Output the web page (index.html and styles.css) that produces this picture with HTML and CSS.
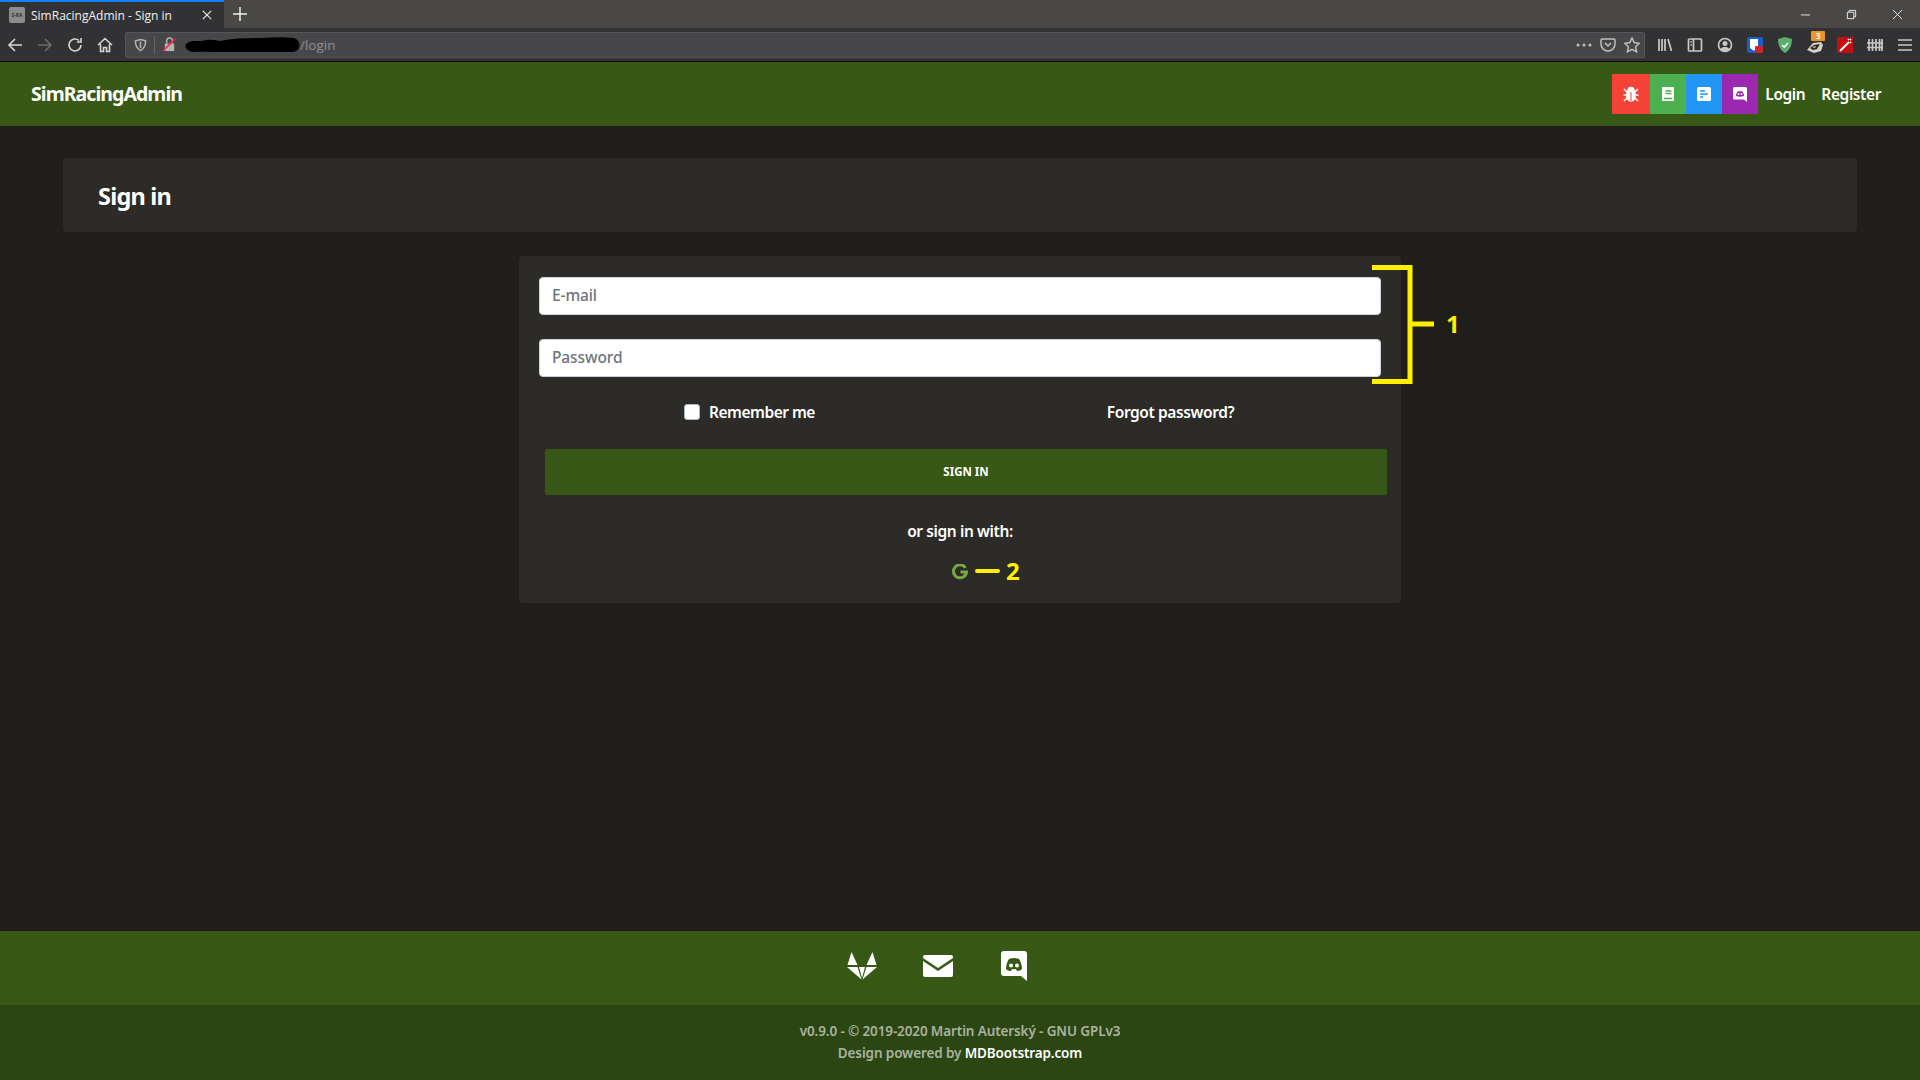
FILE: index.html
```html
<!DOCTYPE html>
<html lang="en">
<head>
<meta charset="utf-8">
<title>SimRacingAdmin - Sign in</title>
<link rel="stylesheet" href="styles.css">
</head>
<body>
<div class="tabbar">
  <div class="tab">
    <span class="favicon">S-RA</span>
    <span class="tab-title">SimRacingAdmin - Sign in</span>
    <svg class="tab-close" viewBox="0 0 12 12"><path d="M1 1l10 10M11 1L1 11"/></svg>
  </div>
  <svg class="new-tab" viewBox="0 0 14 14"><path d="M7 0v14M0 7h14"/></svg>
  <div class="win-controls">
    <svg viewBox="0 0 12 12"><path d="M1 6.500h10"/></svg>
    <svg viewBox="0 0 12 12"><path d="M1.500 3.500h7v7h-7zM3.500 3.500v-2h7v7h-2"/></svg>
    <svg viewBox="0 0 12 12"><path d="M1 1l10 10M11 1L1 11"/></svg>
  </div>
</div>
<div class="toolbar">
  <div class="nav-icons">
    <svg viewBox="0 0 16 16"><path d="M15 8H2M8 2L2 8l6 6"/></svg>
    <svg class="dim" viewBox="0 0 16 16"><path d="M1 8h13M8 2l6 6-6 6"/></svg>
    <svg viewBox="0 0 16 16"><path d="M14 8a6 6 0 1 1-2-4.500M14 1v4h-4"/></svg>
    <svg viewBox="0 0 16 16"><path d="M1 8l7-6.500L15 8M3.500 7v7.500h3v-4h3v4h3V7"/></svg>
  </div>
  <div class="urlbar">
    <svg class="shield" viewBox="0 0 14 14"><path d="M7 1l5.500 1.500c0 5-1.500 8.500-5.500 10.500C3 11 1.500 7.500 1.500 2.500z"/><path d="M7 3.500v7"/></svg>
    <span class="url-sep"></span>
    <svg class="lock" viewBox="0 0 16 16"><path class="lock-body" d="M3 7h10v8H3z"/><path class="lock-arc" d="M5 7V4a3 3 0 0 1 6 0v3"/><path class="lock-slash" d="M1 15L14 2"/></svg>
    <svg class="redacted" viewBox="0 0 116 15"><path d="M2 7c4-4 10-3 16-3 6-2 12-1 18 0 14-3 28-3 42-3 10-1 24-1 32 0 5 2 6 6 5 9-1 4-4 5-8 5H40c-8 1-18-1-30 0C4 15 0 11 2 7z"/></svg>
    <span class="url-path">/login</span>
    <span class="url-spacer"></span>
    <svg class="url-more" viewBox="0 0 16 4"><circle cx="2" cy="2" r="1.500"/><circle cx="8" cy="2" r="1.500"/><circle cx="14" cy="2" r="1.500"/></svg>
    <svg class="url-icon" viewBox="0 0 16 16"><path d="M2 2h12a1 1 0 0 1 1 1v4a7 7 0 0 1-14 0V3a1 1 0 0 1 1-1zM5 6l3 3 3-3"/></svg>
    <svg class="url-icon" viewBox="0 0 16 16"><path d="M8 1l2.200 4.600 5 .7-3.600 3.500.9 5L8 12.400l-4.500 2.400.9-5L.8 6.300l5-.7z"/></svg>
  </div>
  <div class="ext-icons">
    <svg viewBox="0 0 16 16"><path d="M2 2v12M5 2v12M8 2v12M11 2l3.500 12"/></svg>
    <svg viewBox="0 0 16 16"><path d="M2.500 2h11a1 1 0 0 1 1 1v10a1 1 0 0 1-1 1h-11a1 1 0 0 1-1-1V3a1 1 0 0 1 1-1zM6.500 2v12M3.500 5h1.500M3.500 8h1.500"/></svg>
    <svg viewBox="0 0 16 16"><circle cx="8" cy="8" r="6.500"/><circle class="ext-fill" cx="8" cy="6.500" r="2.500"/><path class="ext-fill" d="M3.500 12.500c1-2 2.500-2.500 4.500-2.500s3.500.5 4.500 2.500c-2.500 2-6.500 2-9 0z"/></svg>
    <svg class="ext-color" viewBox="0 0 16 16"><rect x="0" y="0" width="16" height="16" rx="2" fill="#1a5fc8"/><path d="M3 2h8v7l-4 5-4-3z" fill="#fff"/><rect x="8" y="9" width="8" height="7" rx="1" fill="#d2232a"/></svg>
    <svg class="ext-color" viewBox="0 0 16 16"><path d="M8 0l7 2c0 6-2 11-7 14C3 13 1 8 1 2z" fill="#5cae6a"/><path d="M5 8l2.200 2.200L11 6" fill="none" stroke="#fff" stroke-width="1.500"/></svg>
    <div class="badger">
      <svg class="ext-color" viewBox="0 0 16 16"><path d="M0 12L6 5l8-1 2 3-2 6-7 2z" fill="#d8d2c4"/><path d="M3 10l4-3 6-1-3 5-4 1z" fill="#2a2a2a"/><path d="M5 9l4-1-1 2z" fill="#d8d2c4"/></svg>
      <span class="badge">3</span>
    </div>
    <svg class="ext-color" viewBox="0 0 16 16"><rect width="16" height="16" fill="#c40f12"/><path d="M3 14L12 5" stroke="#fff" stroke-width="2"/><path d="M11 2l1 1M14 2l-1 1M14 6l-1-1" stroke="#fff"/></svg>
    <svg viewBox="0 0 16 16"><path d="M2 2v12M5.500 2v12M9 2v12M12.500 2v12M15 2v12M0 6h16M0 10.500h16"/></svg>
    <svg viewBox="0 0 16 16"><path d="M1 3h14M1 8h14M1 13h14"/></svg>
  </div>
</div>

<header class="navbar">
  <a class="brand">SimRacingAdmin</a>
  <nav class="nav-right">
    <span class="nav-btn red"><svg viewBox="0 0 16 16"><path d="M5 4.500a3 3 0 0 1 6 0zM4 6h8v5a4 4 0 0 1-8 0zM1 3l3 3M15 3l-3 3M.5 9H4M15.500 9H12M1 15l3-3M15 15l-3-3" /><path class="bug-line" d="M8 6v9"/></svg></span>
    <span class="nav-btn green"><svg viewBox="0 0 16 16"><path d="M3 1h10a1 1 0 0 1 1 1v12a1 1 0 0 1-1 1H3a1 1 0 0 1-1-1V2a1 1 0 0 1 1-1z"/><path class="cut" d="M5.500 5h6M5.500 7.500h6M4 12.500h8"/></svg></span>
    <span class="nav-btn blue"><svg viewBox="0 0 16 16"><path d="M2.500 1h11A1.500 1.500 0 0 1 15 2.500v11a1.500 1.500 0 0 1-1.500 1.500h-11A1.500 1.500 0 0 1 1 13.500v-11A1.500 1.500 0 0 1 2.500 1z"/><path class="cut" d="M4 5h5M4 8h8M4 11h3"/></svg></span>
    <span class="nav-btn purple"><svg viewBox="0 0 16 16"><path d="M2.500 1h11A1.500 1.500 0 0 1 15 2.500V16l-3-2.500H2.500A1.500 1.500 0 0 1 1 12V2.500A1.500 1.500 0 0 1 2.500 1z"/><path class="cut-fill" d="M4 10c0-2 .8-4 1.500-4.500C7 5 9 5 10.500 5.500 11.200 6 12 8 12 10c-2.500 1-5.500 1-8 0z"/><circle cx="6.500" cy="8" r="1"/><circle cx="9.500" cy="8" r="1"/></svg></span>
    <a class="nav-link">Login</a>
    <a class="nav-link">Register</a>
  </nav>
</header>

<main class="main">
  <section class="page-title"><h1>Sign in</h1></section>
  <form class="login-card">
    <input class="field" type="text" placeholder="E-mail">
    <input class="field" type="password" placeholder="Password">
    <div class="options">
      <label class="remember"><span class="checkbox"></span>Remember me</label>
      <a class="forgot">Forgot password?</a>
    </div>
    <button class="submit" type="button">SIGN IN</button>
    <p class="alt-label">or sign in with:</p>
    <div class="alt-icons">
      <svg class="google" viewBox="0 0 16 16"><path d="M13.500 3.800A6.500 6.500 0 1 0 14.500 8H8.500"/></svg>
    </div>
    <svg class="mark-one" viewBox="0 0 64 120"><path d="M2 3.500h38v114H2M40 60h24"/></svg>
    <span class="mark-num one">1</span>
    <span class="mark-dash"></span>
    <span class="mark-num two">2</span>
  </form>
</main>

<footer class="footer">
  <div class="footer-icons">
    <svg viewBox="0 0 30 28"><path d="M4.500 0l6 13H.5zM25.500 0l-6 13h10zM0 15h10.500L14.500 27.500zM30 15H19.500L15.500 27.500zM12 15h6l-3 11z"/></svg>
    <svg viewBox="0 0 30 22"><path d="M2 0h26a2 2 0 0 1 2 2v1L15 13 0 3V2a2 2 0 0 1 2-2zM0 6l15 10L30 6v14a2 2 0 0 1-2 2H2a2 2 0 0 1-2-2z"/></svg>
    <svg viewBox="0 0 26 30"><path fill-rule="evenodd" d="M3 0h20a3 3 0 0 1 3 3v27l-6-5H3a3 3 0 0 1-3-3V3a3 3 0 0 1 3-3zM8 8C6.500 10 5 14 5 18c2 2 4 2 5 2l1-2c3 .5 1 .5 4 0l1 2c1 0 3 0 5-2 0-4-1.500-8-3-10-3-1.200-7-1.200-10 0zM10 12.500a2 2 0 1 1 0 4 2 2 0 0 1 0-4zM16 12.500a2 2 0 1 1 0 4 2 2 0 0 1 0-4z"/></svg>
  </div>
  <div class="copyright">
    <div>v0.9.0 - © 2019-2020 Martin Auterský - GNU GPLv3</div>
    <div>Design powered by <a>MDBootstrap.com</a></div>
  </div>
</footer>
</body>
</html>
```
FILE: styles.css
```css
* { box-sizing: border-box; }
html, body { height: 100%; }
body {
  margin: 0;
  height: 1080px;
  display: flex;
  flex-direction: column;
  overflow: hidden;
  background: #1f1e1b;
  color: #fff;
  font-family: "Noto Sans", "Open Sans", sans-serif;
  font-weight: 600;
  font-size: 15.500px;
  letter-spacing: -.4px;
}

/* browser chrome */
.tabbar { height: 28px; flex: none; display: flex; align-items: center; background: #4a4846; letter-spacing: 0; }
.tab {
  width: 224px; height: 28px; display: flex; align-items: center;
  padding-left: 9px; background: #323234; border-top: 2px solid #0a84ff;
  font-family: "Open Sans", sans-serif; font-weight: 400; font-size: 12px; color: #f1f1f1;
}
.favicon {
  width: 16px; height: 16px; margin-right: 6px; background: #8c8c8c; border-radius: 2px;
  font-size: 5px; line-height: 16px; text-align: center; color: #333; font-weight: 700;
}
.tab-title { flex: 1; white-space: nowrap; }
.tab-close { width: 10px; height: 10px; margin-right: 12px; fill: none; stroke: #e6e6e6; stroke-width: 1.500; }
.new-tab { width: 14px; height: 14px; margin-left: 9px; fill: none; stroke: #eee; stroke-width: 1.500; }
.win-controls { margin-left: auto; display: flex; gap: 35px; padding-right: 17px; }
.win-controls svg { width: 11px; height: 11px; fill: none; stroke: #f0f0f0; stroke-width: 1; }

.toolbar { height: 34px; flex: none; display: flex; align-items: center; background: #323234; border-bottom: 1px solid #0c0c0d; letter-spacing: 0; }
.nav-icons { width: 125px; flex: none; display: flex; gap: 14px; padding-left: 7px; }
.nav-icons svg { width: 16px; height: 16px; fill: none; stroke: #d6d6d6; stroke-width: 1.600; }
.nav-icons svg.dim { stroke: #6c6c6c; }
.urlbar {
  width: 1520px; height: 26px; flex: none; display: flex; align-items: center;
  background: #474749; border: 1px solid #565658; border-radius: 2px; padding: 0 4px 0 8px;
}
.shield { width: 13px; height: 14px; fill: none; stroke: #b4b4b4; stroke-width: 1.600; }
.url-sep { width: 1px; height: 18px; background: #626264; margin: 0 7px 0 7px; }
.lock { width: 15px; height: 15px; margin-right: 7px; }
.lock-body { fill: #b4b4b4; }
.lock-arc { fill: none; stroke: #b4b4b4; stroke-width: 1.500; }
.lock-slash { stroke: #ff1f4f; stroke-width: 1.600; }
.redacted { width: 116px; height: 15px; fill: #000; }
.url-path { font-family: "Open Sans", sans-serif; font-weight: 400; font-size: 13.500px; color: #8f8f91; padding-top: 1px; }
.url-spacer { flex: 1; }
.url-more { width: 16px; height: 4px; margin-right: 8px; fill: #c0c0c0; }
.url-icon { width: 16px; height: 16px; margin-right: 8px; fill: none; stroke: #c0c0c0; stroke-width: 1.500; }
.url-icon:last-child { margin-right: 0; }
.ext-icons { flex: 1; display: flex; align-items: center; gap: 14px; padding-left: 12px; }
.ext-icons svg { width: 16px; height: 16px; flex: none; fill: none; stroke: #c8c8c8; stroke-width: 1.700; }
.ext-icons .ext-color { stroke: none; }
.ext-icons .ext-fill { fill: #c8c8c8; stroke: none; }
.badger { position: relative; width: 16px; height: 16px; }
.badge {
  position: absolute; top: -6px; left: 4px; width: 14px; height: 10px; background: #ec9329; border-radius: 1px;
  font-size: 9px; line-height: 10px; text-align: center; color: #fff;
}

/* navbar */
.navbar {
  height: 64px; flex: none; display: flex; align-items: center; justify-content: space-between;
  background: #375915; padding: 0 39px 0 31px;
}
.brand { font-size: 19.500px; font-weight: 700; letter-spacing: -.95px; padding-bottom: 2px; }
.nav-right { display: flex; align-items: center; }
.nav-btn { width: 36px; height: 40px; display: flex; align-items: center; justify-content: center; }
.nav-btn.red { width: 38px; background: #f44336; }
.nav-btn.green { background: #4caf50; }
.nav-btn.blue { background: #2196f3; }
.nav-btn.purple { background: #9c27b0; }
.nav-btn svg { width: 16px; height: 16px; fill: #fff; }
.nav-btn.red path { stroke: #fff; stroke-width: 1.500; }
.nav-btn.red .bug-line { stroke: #f44336; stroke-width: 1; }
.nav-btn .cut { fill: none; stroke-width: 1.500; }
.nav-btn.green .cut { stroke: #4caf50; }
.nav-btn.blue .cut { stroke: #2196f3; }
.nav-btn.purple .cut-fill { fill: #9c27b0; }
.nav-link { font-weight: 600; font-size: 15.500px; margin-left: 7px; }
.nav-link + .nav-link { margin-left: 16px; }

/* main */
.main { flex: 1; display: flex; flex-direction: column; align-items: center; padding-top: 32px; }
.page-title {
  width: 1794px; height: 74px; display: flex; align-items: center;
  background: #2c2b27; border-radius: 4px; padding: 0 35px 0;
}
.page-title h1 { margin: 2px 0 0; font-size: 23.500px; font-weight: 700; letter-spacing: -.8px; }
.login-card {
  position: relative; width: 882px; height: 347px; margin-top: 24px;
  background: #2c2b27; border-radius: 4px; padding: 21px 20px 0;
  display: flex; flex-direction: column;
}
.field {
  width: 842px; height: 38px; flex: none; padding: 0 12px 2px; margin-bottom: 24px;
  border: 1px solid #ced4da; border-radius: 4px; background: #fff;
  font: inherit; font-weight: 500; font-size: 15.500px; letter-spacing: -.1px;
}
.field::placeholder { color: #6c757d; opacity: 1; }
.options { display: grid; grid-template-columns: 1fr 1fr; justify-items: center; align-items: center; height: 24px; margin-top: -1px; }
.remember { display: flex; align-items: center; gap: 9px; letter-spacing: -.5px; }
.checkbox { width: 16px; height: 16px; background: #fff; border: 1px solid #adb5bd; border-radius: 3px; }
.submit {
  width: 842px; height: 46px; flex: none; margin: 25px 0 0 6px; border: 0; border-radius: 2px;
  background: #375915; color: #fff; font: inherit; font-size: 11.500px; font-weight: 700; padding-bottom: 2px;
}
.alt-label { margin: 24px 0 0; height: 24px; line-height: 24px; text-align: center; }
.alt-icons { display: flex; justify-content: center; margin-top: 21px; }
.google { width: 16px; height: 16px; fill: none; stroke: #76a944; stroke-width: 3; }

/* annotations drawn over the card */
.mark-one { position: absolute; left: 851px; top: 8px; width: 64px; height: 120px; fill: none; stroke: #ffef00; stroke-width: 5; stroke-linejoin: miter; }
.mark-num { position: absolute; color: #ffef00; font-family: "Noto Sans", sans-serif; font-weight: 700; font-size: 24px; line-height: 24px; letter-spacing: 0; }
.mark-num.one { left: 927px; top: 56px; }
.mark-num.two { left: 487px; top: 303px; }
.mark-dash { position: absolute; left: 456px; top: 313px; width: 25px; height: 4px; background: #ffef00; border-radius: 2px; }

/* footer */
.footer { flex: none; }
.footer-icons { height: 74px; display: flex; align-items: center; justify-content: center; gap: 46px; background: #375915; padding: 0 45px 5px 0; }
.footer-icons svg { height: 30px; width: 30px; fill: #fff; }
.copyright {
  height: 75px; display: flex; flex-direction: column; justify-content: center; gap: 0;
  background: #2b4513; color: rgba(255,255,255,.6); text-align: center; font-size: 13.500px; line-height: 22px; letter-spacing: -.12px; padding-bottom: 1px;
}
.copyright a { color: #fff; }
```
